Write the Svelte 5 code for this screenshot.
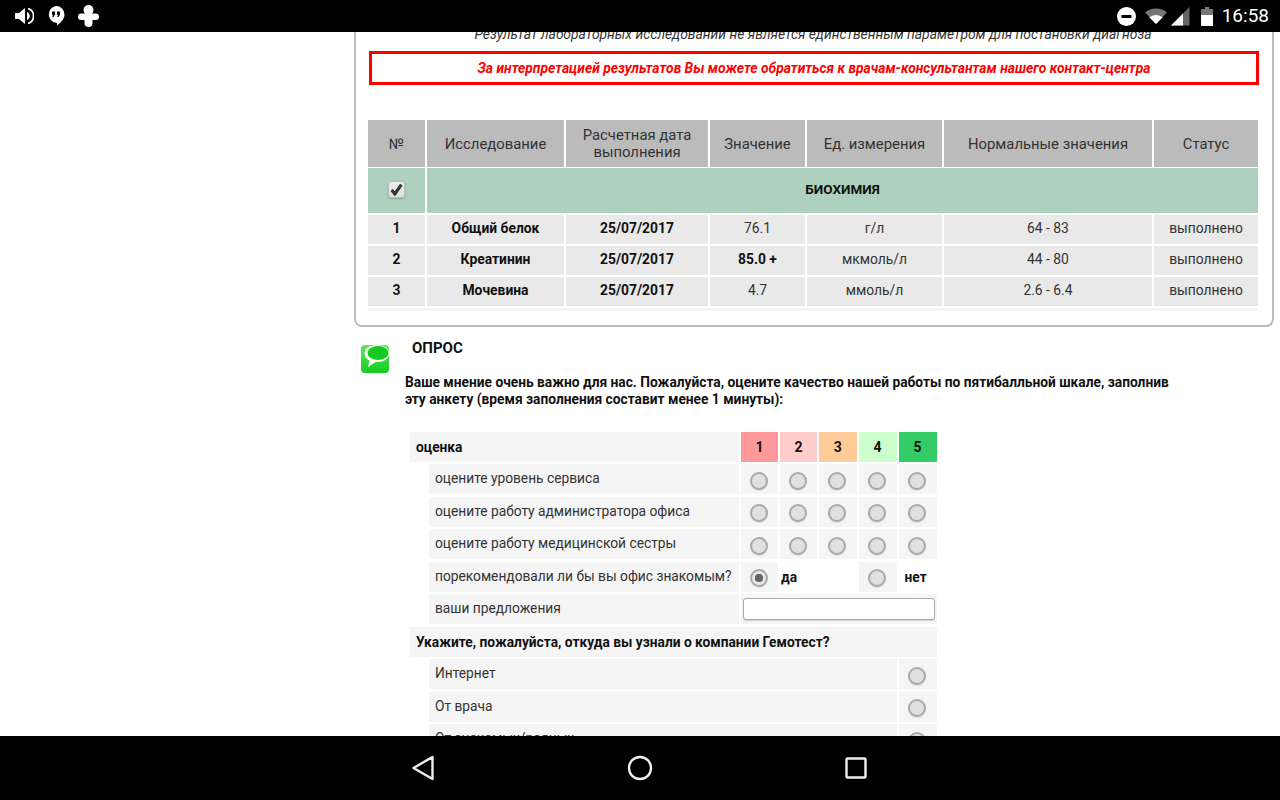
<script lang="ts">
  const columns = [
    { label: '№', width: 58 },
    { label: 'Исследование', width: 139 },
    { label: 'Расчетная дата выполнения', width: 144 },
    { label: 'Значение', width: 97 },
    { label: 'Ед. измерения', width: 137 },
    { label: 'Нормальные значения', width: 210 },
    { label: 'Статус', width: 105 }
  ];

  const results = [
    { id: 1, name: 'Общий белок', date: '25/07/2017', value: '76.1', high: false, unit: 'г/л', range: '64 - 83' },
    { id: 2, name: 'Креатинин', date: '25/07/2017', value: '85.0 +', high: true, unit: 'мкмоль/л', range: '44 - 80' },
    { id: 3, name: 'Мочевина', date: '25/07/2017', value: '4.7', high: false, unit: 'ммоль/л', range: '2.6 - 6.4' }
  ];

  const scale = [
    { n: 1, color: '#ff9999' },
    { n: 2, color: '#ffcccc' },
    { n: 3, color: '#ffcc99' },
    { n: 4, color: '#ccffcc' },
    { n: 5, color: '#33cc66' }
  ];

  const ratings = ['оцените уровень сервиса', 'оцените работу администратора офиса', 'оцените работу медицинской сестры'];
  const sources = ['Интернет', 'От врача', 'От знакомых/родных'];
</script>

<div class="screen">
  <header class="status">
    <div class="status-group left">
      <svg width="19" height="18" viewBox="0 0 19 18"><path d="M0 6h4l6-5v16l-6-5H0z" fill="#fff" /><path d="M12 5c2 1 2.800 2.500 2.800 4s-.8 3-2.800 4z" fill="#fff" /><path d="M13 1.500c3.500 1 5.500 4 5.500 7.500s-2 6.500-5.500 7.500" fill="none" stroke="#fff" stroke-width="1.600" /></svg>
      <svg width="18" height="20" viewBox="0 0 18 20"><path d="M9 0a8.500 8.500 0 0 1 8.500 8.500c0 4.500-4 8.500-7.500 11v-2.700H9A8.500 8.500 0 0 1 9 0z" fill="#fff" /><path d="M5 5.500h3v3L6.500 11H5.200l.9-2.300H5zM10 5.500h3v3L11.500 11h-1.300l.9-2.300H10z" fill="#000" /></svg>
      <svg width="21" height="22" viewBox="0 0 21 22"><circle cx="10.500" cy="5" r="5" fill="#fff" /><rect x="0" y="8.500" width="21" height="6.500" rx="3.250" fill="#fff" /><rect x="6.500" y="8" width="8" height="14" rx="4" fill="#fff" /></svg>
    </div>
    <div class="status-group right">
      <svg class="dnd" width="19" height="19" viewBox="0 0 19 19"><circle cx="9.500" cy="9.500" r="9.500" fill="#fff" /><rect x="4.500" y="8" width="10" height="3" fill="#000" /></svg>
      <svg class="wifi" width="22" height="16" viewBox="0 0 22 16"><path d="M0 4.500C3 2 6.800.5 11 .5s8 1.500 11 4L11 16z" fill="#777" /><path d="M4.500 9.500C6.200 8 8.500 7 11 7s4.800 1 6.500 2.500L11 16z" fill="#fff" /></svg>
      <svg class="signal" width="19" height="19" viewBox="0 0 19 19"><path d="M18.500 0v18.500H0z" fill="#666" /><path d="M12 6.500v12H0z" fill="#fff" /></svg>
      <svg class="battery" width="12" height="19" viewBox="0 0 12 19"><path d="M4 0h4v2h4v17H0V2h4z" fill="#777" /><rect y="8" width="12" height="11" fill="#fff" /></svg>
      <span class="clock">16:58</span>
    </div>
  </header>

  <main class="page">
    <section class="card">
      <p class="note">Результат лабораторных исследований не является единственным параметром для постановки диагноза</p>
      <p class="alert">За интерпретацией результатов Вы можете обратиться к врачам-консультантам нашего контакт-центра</p>

      <table class="results">
        <colgroup>
          {#each columns as col}
            <col style="width: {col.width}px" />
          {/each}
        </colgroup>
        <thead>
          <tr>
            {#each columns as col}
              <th>{col.label}</th>
            {/each}
          </tr>
        </thead>
        <tbody>
          <tr class="group">
            <td><span class="check"><svg width="13" height="13" viewBox="0 0 12 12"><path d="M1.500 6.500 4.500 10 10.500 1.500" fill="none" stroke="#333" stroke-width="3" /></svg></span></td>
            <td colspan="6"><b>БИОХИМИЯ</b></td>
          </tr>
          {#each results as row}
            <tr class="row">
              <td><b>{row.id}</b></td>
              <td><b>{row.name}</b></td>
              <td><b>{row.date}</b></td>
              <td class:strong={row.high}>{row.value}</td>
              <td>{row.unit}</td>
              <td>{row.range}</td>
              <td>выполнено</td>
            </tr>
          {/each}
          <tr class="tail"><td colspan="7"></td></tr>
        </tbody>
      </table>
    </section>

    <section class="survey">
      <div class="logo">
        <svg width="30" height="30" viewBox="0 0 30 30">
          <defs>
            <linearGradient id="logo-bg" x1="0" y1="0" x2="0" y2="1">
              <stop offset="0" stop-color="#5fe85a" />
              <stop offset="1" stop-color="#13cc22" />
            </linearGradient>
          </defs>
          <rect x="1" y="1" width="28" height="28" rx="4" fill="url(#logo-bg)" />
          <path d="M17 1c7 0 12 3.500 12 8.500S24 18 17 18h-1.500L8 23l1.500-6.500C6.500 15 4.500 12.500 4.500 9.500 4.500 4.500 10 1 17 1z" fill="#fff" />
          <ellipse cx="18" cy="9" rx="10.500" ry="7" fill="#17c81f" />
        </svg>
      </div>
      <h2>ОПРОС</h2>
      <p class="intro">Ваше мнение очень важно для нас. Пожалуйста, оцените качество нашей работы по пятибалльной шкале, заполнив эту анкету (время заполнения составит менее 1 минуты):</p>

      <div class="form">
        <div class="cell title score-label">оценка</div>
        {#each scale as s}
          <div class="cell score" style="background: {s.color}">{s.n}</div>
        {/each}

        {#each ratings as label}
          <div class="cell text sub">{label}</div>
          {#each scale as s}
            <div class="cell"><input type="radio" name={label} /></div>
          {/each}
        {/each}

        <div class="cell text sub">порекомендовали ли бы вы офис знакомым?</div>
        <div class="cell"><input type="radio" name="recommend" checked /></div>
        <div class="answer wide">да</div>
        <div class="cell"><input type="radio" name="recommend" /></div>
        <div class="answer no">нет</div>

        <div class="cell text sub">ваши предложения</div>
        <div class="cell field"><input type="text" /></div>

        <div class="cell title question">Укажите, пожалуйста, откуда вы узнали о компании Гемотест?</div>

        {#each sources as label}
          <div class="cell text source">{label}</div>
          <div class="cell"><input type="radio" name="source" /></div>
        {/each}
      </div>
    </section>
  </main>

  <footer class="nav">
    <svg width="24" height="26" viewBox="0 0 24 26"><path d="M21.500 2 2.500 13l19 11z" fill="none" stroke="#eee" stroke-width="2.400" stroke-linejoin="round" /></svg>
    <svg width="26" height="26" viewBox="0 0 26 26"><circle cx="13" cy="13" r="11" fill="none" stroke="#eee" stroke-width="2.400" /></svg>
    <svg width="22" height="22" viewBox="0 0 22 22"><rect x="1.500" y="1.500" width="19" height="19" rx="1" fill="none" stroke="#eee" stroke-width="2.400" /></svg>
  </footer>
</div>

<style>
  :global(body) {
    margin: 0;
    background: #fff;
  }

  .screen {
    display: flex;
    flex-direction: column;
    height: 800px;
    overflow: hidden;
    font-family: Roboto, "Liberation Sans", sans-serif;
    color: #222;
  }

  .status {
    flex: 0 0 32px;
    display: flex;
    justify-content: space-between;
    align-items: center;
    background: #000;
    position: relative;
    z-index: 2;
  }

  .status-group {
    display: flex;
    align-items: center;
  }

  .left {
    gap: 13px;
    padding-left: 15px;
  }

  .right {
    padding-right: 11px;
  }

  .dnd {
    margin-right: -2px;
  }

  .wifi {
    margin-left: 11px;
  }

  .signal {
    margin-left: 4px;
  }

  .battery {
    margin-left: 11px;
  }

  .clock {
    margin-left: 9px;
    color: #fff;
    font-size: 19px;
    line-height: 32px;
  }

  .page {
    flex: 1;
    min-height: 0;
    overflow: hidden;
    padding-left: 354px;
  }

  .card {
    width: 890px;
    margin: -10px 0 0;
    padding: 0 14px 14px 12px;
    border: solid #bbb;
    border-width: 0 2px 2px 2px;
    border-radius: 0 0 8px 8px;
  }

  .note {
    margin: 0;
    padding-top: 4px;
    height: 17px;
    line-height: 17px;
    text-align: center;
    font-size: 13.850px;
    font-style: italic;
    color: #333;
  }

  .alert {
    margin: 8px -1px 0 1px;
    height: 28px;
    line-height: 28px;
    border: 3px solid #f00;
    text-align: center;
    font-size: 13.850px;
    font-weight: 700;
    font-style: italic;
    color: #f00;
  }

  .results {
    width: 890px;
    margin-top: 35px;
    table-layout: fixed;
    border-collapse: collapse;
    text-align: center;
    font-size: 13.850px;
  }

  .results th,
  .results td {
    padding: 0;
    border-left: 2px solid #fff;
  }

  .results th:first-child,
  .results td:first-child {
    border-left: 0;
  }

  .results th {
    box-sizing: border-box;
    height: 47px;
    background: #bbb;
    font-size: 14.850px;
    font-weight: 400;
    line-height: 17px;
    color: #333;
    padding: 2px 8px 0;
  }

  .group td {
    height: 43px;
    background: #aed1be;
    border-top: 1px solid #fff;
    border-bottom: 2px solid #fff;
    padding-bottom: 2px;
  }

  .group b {
    font-size: 13.500px;
    color: #111;
  }

  .check {
    display: inline-flex;
    align-items: center;
    justify-content: center;
    width: 15px;
    height: 15px;
    vertical-align: middle;
    background: linear-gradient(#eee, #ddd);
    border: 1px solid #bbb;
    border-radius: 3px;
    box-shadow: 0 1px 2px rgba(0, 0, 0, 0.25);
  }

  .row td {
    box-sizing: border-box;
    height: 31px;
    padding-bottom: 2px;
    background: #e9e9e9;
    border-bottom: 2px solid #fff;
    color: #333;
  }

  .row b,
  .row .strong {
    font-weight: 700;
    color: #111;
  }

  .tail td {
    height: 3px;
    background: #f5f5f5;
  }

  .survey {
    position: relative;
    width: 830px;
    padding: 13px 0 0 51px;
  }

  .logo {
    position: absolute;
    left: 6px;
    top: 17px;
    width: 30px;
    height: 30px;
  }

  h2 {
    margin: 0 0 0 7px;
    font-size: 15px;
    font-weight: 700;
    line-height: 17px;
    color: #111;
  }

  .intro {
    width: 775px;
    margin: 17px 0 0;
    font-size: 13.750px;
    font-weight: 700;
    line-height: 17px;
    color: #111;
  }

  .form {
    display: grid;
    grid-template-columns: 17px 310px 37px 37px 37.500px 38px 38px;
    grid-auto-rows: 30px;
    column-gap: 2px;
    row-gap: 2.500px;
    width: 526.500px;
    margin: 24px 0 0 5px;
    font-size: 13.750px;
  }

  .cell {
    display: flex;
    align-items: center;
    justify-content: center;
    background: #f5f5f5;
  }

  .title {
    justify-content: flex-start;
    padding-left: 6px;
    font-weight: 700;
    color: #111;
  }

  .score-label {
    grid-column: 1 / 3;
  }

  .question {
    grid-column: 1 / -1;
  }

  .score {
    font-size: 14px;
    font-weight: 700;
    color: #111;
  }

  .text {
    justify-content: flex-start;
    padding-left: 6px;
    padding-bottom: 2px;
    box-sizing: border-box;
    color: #333;
  }

  .sub {
    grid-column: 2;
  }

  .source {
    grid-column: 2 / 7;
  }

  .answer {
    display: flex;
    align-items: center;
    padding-left: 1px;
    font-weight: 700;
    color: #111;
  }

  .answer.wide {
    grid-column: span 2;
  }

  .answer.no {
    padding-left: 6px;
  }

  .field {
    grid-column: 3 / -1;
  }

  input[type='radio'] {
    appearance: none;
    box-sizing: border-box;
    width: 18px;
    height: 18px;
    margin: 3px 0 0 -2px;
    border: 2px solid #aaa;
    border-radius: 50%;
    background: #e0e0e0;
    box-shadow: 0 1px 1px rgba(0, 0, 0, 0.1);
  }

  input[type='radio']:checked {
    background: radial-gradient(circle, #666 0 4px, #e6e6e6 4.500px);
  }

  input[type='text'] {
    box-sizing: border-box;
    width: 192px;
    height: 22px;
    margin: 0;
    border: 1px solid #aaa;
    border-radius: 3px;
    background: #fff;
    box-shadow: 0 1px 1px rgba(0, 0, 0, 0.15);
  }

  .nav {
    flex: 0 0 64px;
    display: grid;
    grid-template-columns: 24px 26px 22px;
    column-gap: 192px;
    justify-content: start;
    align-items: center;
    padding-left: 411px;
    background: #000;
    position: relative;
    z-index: 2;
  }
</style>
